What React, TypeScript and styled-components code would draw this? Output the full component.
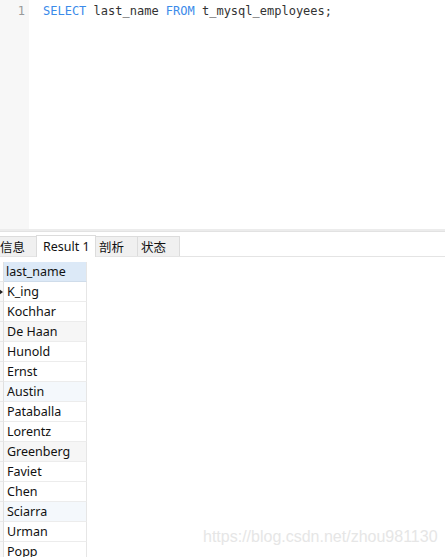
import React from "react";
import styled, { createGlobalStyle } from "styled-components";

const GlobalStyle = createGlobalStyle`
	html, body {
		margin: 0;
		padding: 0;
		background: #ffffff;
	}
	body {
		width: 445px;
		height: 557px;
		overflow: hidden;
		font-family: "Noto Sans", "Noto Sans CJK SC", sans-serif;
	}
`;

const Page = styled.div`
	position: relative;
	display: flex;
	flex-direction: column;
	width: 445px;
	height: 557px;
	overflow: hidden;
	background: #ffffff;

	& > * {
		flex-shrink: 0;
	}
`;

const Editor = styled.div`
	display: flex;
	height: 229px;
`;

const Gutter = styled.div`
	width: 29px;
	background: #f7f7f7;
	color: #999999;
	font-family: "DejaVu Sans Mono", monospace;
	font-size: 12px;
	line-height: 22px;
	text-align: right;
	padding-right: 4px;
	box-sizing: border-box;
`;

const Code = styled.div`
	flex: 1;
	padding-left: 14px;
	font-family: "DejaVu Sans Mono", monospace;
	font-size: 12px;
	line-height: 22px;
	color: #333333;
	white-space: pre;
`;

const Keyword = styled.span`
	color: #3b8bea;
`;

const Splitter = styled.div`
	height: 2px;
	background: #ececec;
	border-bottom: 1px solid #e2e2e2;
`;

const TabBar = styled.div`
	display: flex;
	align-items: flex-end;
	height: 22px;
	margin-top: 2px;
	border-bottom: 1px solid #e4e4e4;
`;

const Tab = styled.div<{ $active?: boolean; $width: number; $pad?: number }>`
	width: ${({ $width }) => $width}px;
	height: ${({ $active }) => ($active ? 22 : 20)}px;
	box-sizing: border-box;
	display: flex;
	align-items: center;
	padding-left: ${({ $pad }) => $pad ?? 3}px;
	background: ${({ $active }) => ($active ? "#ffffff" : "#f0f0f0")};
	border: 1px solid #dcdcdc;
	border-bottom: none;
	margin-right: -1px;
	font-size: 12.5px;
	color: #111111;
	margin-bottom: ${({ $active }) => ($active ? -1 : 0)}px;
	position: relative;
`;

const Grid = styled.div`
	display: grid;
	grid-template-columns: 4px 83px;
	margin-top: 5px;
`;

const Indicator = styled.div<{ $header?: boolean }>`
	height: 20px;
	box-sizing: border-box;
	border-bottom: 1px solid #e8e8e8;
	border-right: 1px solid #e0e0e0;
	background: ${({ $header }) => ($header ? "#ffffff" : "#f8f8f8")};
	position: relative;
`;

const Pointer = styled.div`
	position: absolute;
	left: -1px;
	top: 7px;
	width: 0;
	height: 0;
	border-top: 3px solid transparent;
	border-bottom: 3px solid transparent;
	border-left: 4px solid #222222;
`;

const HeaderCell = styled.div`
	height: 20px;
	box-sizing: border-box;
	background: #dce9f7;
	border-bottom: 1px solid #cfdcea;
	border-right: 1px solid #e6e6e6;
	padding-left: 2px;
	font-size: 12.5px;
	line-height: 20px;
	color: #111111;
`;

const Cell = styled.div<{ $tint?: string }>`
	height: 20px;
	box-sizing: border-box;
	background: ${({ $tint }) => $tint || "#ffffff"};
	border-bottom: 1px solid #ececec;
	border-right: 1px solid #e6e6e6;
	padding-left: 3px;
	font-size: 12.5px;
	line-height: 20px;
	color: #111111;
	white-space: nowrap;
`;

const Watermark = styled.div`
	position: absolute;
	left: 203px;
	top: 528px;
	font-family: "Liberation Sans", Arial, sans-serif;
	font-size: 16px;
	color: #e6e6e6;
	white-space: nowrap;
`;

const names = [
	"K_ing",
	"Kochhar",
	"De Haan",
	"Hunold",
	"Ernst",
	"Austin",
	"Pataballa",
	"Lorentz",
	"Greenberg",
	"Faviet",
	"Chen",
	"Sciarra",
	"Urman",
	"Popp",
];

const tintFor = (i: number) => {
	if (i % 3 !== 2) return undefined;
	return i % 6 === 2 ? "#f6f6f6" : "#f4f8fc";
};

const App: React.FC = () => {
	return (
		<Page>
			<GlobalStyle />
			<Editor>
				<Gutter>1</Gutter>
				<Code>
					<Keyword>SELECT</Keyword> last_name <Keyword>FROM</Keyword> t_mysql_employees;
				</Code>
			</Editor>
			<Splitter />
			<TabBar>
				<Tab $width={38} $pad={0} style={{ marginLeft: -1 }}>信息</Tab>
				<Tab $width={60} $pad={6} $active>Result 1</Tab>
				<Tab $width={43}>剖析</Tab>
				<Tab $width={43}>状态</Tab>
			</TabBar>
			<Grid>
				<Indicator $header />
				<HeaderCell>last_name</HeaderCell>
				{names.map((n, i) => (
					<React.Fragment key={n}>
						<Indicator>{i === 0 && <Pointer />}</Indicator>
						<Cell $tint={tintFor(i)}>{n}</Cell>
					</React.Fragment>
				))}
			</Grid>
			<Watermark>https://blog.csdn.net/zhou981130</Watermark>
		</Page>
	);
};

export default App;
